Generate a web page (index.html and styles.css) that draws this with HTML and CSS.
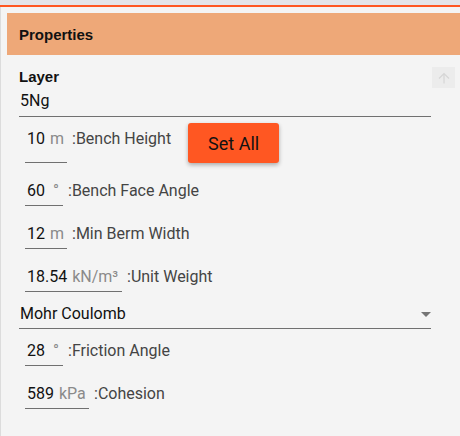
FILE: index.html
```html
<!DOCTYPE html>
<html>
<head>
<meta charset="utf-8">
<link rel="stylesheet" href="styles.css">
</head>
<body>
<div class="topbar"></div>
<div class="accent"></div>
<div class="panel">
  <div class="header">Properties</div>
  <div class="content">
    <button class="scroll-up" aria-label="Scroll up">
      <svg width="12" height="12" viewBox="0 0 12 12"><path d="M6 11.5V1.5M1 6.5l5-5 5 5" fill="none" stroke="#d6d6d6" stroke-width="1.2"/></svg>
    </button>
    <div class="layer-label">Layer</div>
    <div class="text-field">5Ng</div>
    <div class="row first">
      <div class="field w42"><span class="val">10</span><span class="unit">m</span></div>
      <span class="label">:Bench Height</span>
      <button class="set-all">Set All</button>
    </div>
    <div class="row">
      <div class="field w38"><span class="val">60</span><span class="unit deg">°</span></div>
      <span class="label">:Bench Face Angle</span>
    </div>
    <div class="row">
      <div class="field w42"><span class="val">12</span><span class="unit">m</span></div>
      <span class="label">:Min Berm Width</span>
    </div>
    <div class="row">
      <div class="field w97"><span class="val">18.54</span><span class="unit">kN/m³</span></div>
      <span class="label">:Unit Weight</span>
    </div>
    <div class="select">
      <span>Mohr Coulomb</span>
      <span class="caret"></span>
    </div>
    <div class="row after-select">
      <div class="field w38"><span class="val">28</span><span class="unit deg">°</span></div>
      <span class="label">:Friction Angle</span>
    </div>
    <div class="row">
      <div class="field w64"><span class="val">589</span><span class="unit">kPa</span></div>
      <span class="label">:Cohesion</span>
    </div>
  </div>
</div>
</body>
</html>
```
FILE: styles.css
```css
html, body {
  margin: 0;
  padding: 0;
  background: #f4f4f4;
  font-family: Roboto, "Liberation Sans", sans-serif;
  width: 460px;
  height: 436px;
  overflow: hidden;
}
.topbar {
  height: 5px;
  background: #e4e5e9;
}
.accent {
  height: 2px;
  background: #ff5722;
}
.panel {
  border-left: 1px solid #dcdcdc;
  padding: 6px 0 0 6px;
  height: 429px;
  box-sizing: border-box;
}
.header {
  height: 42px;
  background: #eea878;
  display: flex;
  align-items: center;
  padding-left: 12px;
  font-family: "Liberation Sans", Arial, sans-serif;
  font-weight: 700;
  font-size: 15px;
  color: #111;
}
.content {
  position: relative;
  padding: 13px 29px 0 12px;
}
.scroll-up {
  position: absolute;
  top: 12px;
  right: 5px;
  width: 23px;
  height: 21px;
  border: none;
  background: #ececec;
  padding: 0;
  display: flex;
  align-items: center;
  justify-content: center;
}
.layer-label {
  font-family: "Liberation Sans", Arial, sans-serif;
  font-weight: 700;
  font-size: 15px;
  line-height: 18px;
  color: #111;
}
.text-field {
  font-size: 16px;
  line-height: 20px;
  padding: 5px 0 5px 1px;
  border-bottom: 1px solid #707070;
  color: #111;
}
.row {
  display: flex;
  align-items: flex-start;
  margin-top: 13px;
  padding-left: 6px;
  font-size: 16px;
}
.row.first {
  margin-top: 6px;
  align-items: stretch;
}
.row.after-select {
  margin-top: 7px;
}
.field {
  display: flex;
  gap: 5px;
  box-sizing: border-box;
  line-height: 20px;
  padding: 5px 0 4px 2px;
  border-bottom: 1px solid #707070;
  white-space: nowrap;
}
.row.first .field {
  padding-top: 6px;
}
.w38 { width: 38px; }
.w42 { width: 42px; }
.w64 { width: 64px; }
.w97 { width: 97px; }
.val { color: #111; }
.unit { color: #8a8a8a; }
.unit.deg { margin-left: 3px; }
.label {
  color: #444;
  line-height: 20px;
  padding-top: 5px;
  margin-left: 5px;
  white-space: nowrap;
}
.row.first .label {
  padding-top: 6px;
}
.set-all {
  margin-left: 17px;
  width: 91px;
  height: 40px;
  border: none;
  border-radius: 3px;
  background: #ff5722;
  color: #111;
  font-family: Roboto, "Liberation Sans", sans-serif;
  font-size: 18px;
  box-shadow: 0 2px 4px rgba(0,0,0,0.3);
}
.select {
  display: flex;
  align-items: center;
  justify-content: space-between;
  margin-top: 12px;
  font-size: 16px;
  line-height: 20px;
  padding: 0 0 4px 1px;
  border-bottom: 1px solid #707070;
  color: #111;
}
.caret {
  width: 0;
  height: 0;
  border-left: 5px solid transparent;
  border-right: 5px solid transparent;
  border-top: 5px solid #757575;
}
```
